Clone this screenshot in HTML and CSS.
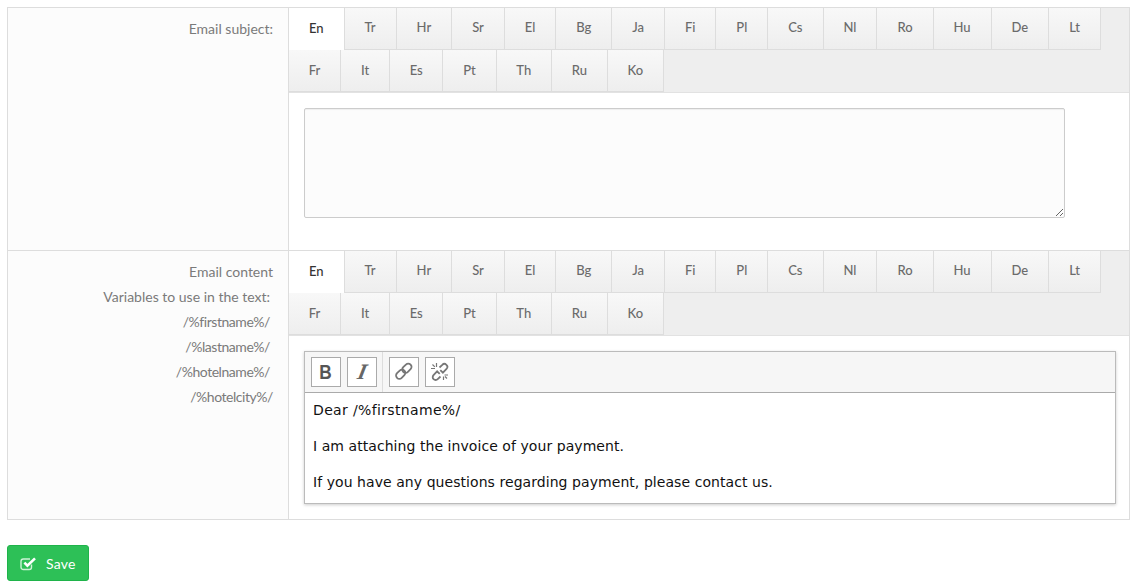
FILE: index.html
```html
<!DOCTYPE html>
<html lang="en">
<head>
<meta charset="utf-8">
<title>Email settings</title>
<link rel="stylesheet" href="styles.css">
</head>
<body>
<div class="form">
  <div class="row row-subject">
    <div class="label"><div class="line">Email subject:</div></div>
    <div class="field">
      <div class="tabs">
        <a class="tab active">En</a><a class="tab">Tr</a><a class="tab">Hr</a><a class="tab">Sr</a><a class="tab">El</a><a class="tab">Bg</a><a class="tab">Ja</a><a class="tab">Fi</a><a class="tab">Pl</a><a class="tab">Cs</a><a class="tab">Nl</a><a class="tab">Ro</a><a class="tab">Hu</a><a class="tab">De</a><a class="tab">Lt</a>
        <a class="tab">Fr</a><a class="tab">It</a><a class="tab">Es</a><a class="tab">Pt</a><a class="tab">Th</a><a class="tab">Ru</a><a class="tab">Ko</a>
      </div>
      <div class="pane"><textarea class="subject"></textarea></div>
    </div>
  </div>
  <div class="row row-content">
    <div class="label">
      <div class="line">Email content</div>
      <div class="line inset">Variables to use in the text:</div>
      <div class="line inset var">/%firstname%/</div>
      <div class="line inset var">/%lastname%/</div>
      <div class="line inset var">/%hotelname%/</div>
      <div class="line var">/%hotelcity%/</div>
    </div>
    <div class="field">
      <div class="tabs">
        <a class="tab active">En</a><a class="tab">Tr</a><a class="tab">Hr</a><a class="tab">Sr</a><a class="tab">El</a><a class="tab">Bg</a><a class="tab">Ja</a><a class="tab">Fi</a><a class="tab">Pl</a><a class="tab">Cs</a><a class="tab">Nl</a><a class="tab">Ro</a><a class="tab">Hu</a><a class="tab">De</a><a class="tab">Lt</a>
        <a class="tab">Fr</a><a class="tab">It</a><a class="tab">Es</a><a class="tab">Pt</a><a class="tab">Th</a><a class="tab">Ru</a><a class="tab">Ko</a>
      </div>
      <div class="pane">
        <div class="editor">
          <div class="toolbar">
            <div class="group">
              <button class="tool" type="button"><span class="glyph-b">B</span></button>
              <button class="tool" type="button"><span class="glyph-i">I</span></button>
            </div>
            <div class="group">
              <button class="tool" type="button" aria-label="Link">
                <svg width="20" height="20" viewBox="0 0 20 20" fill="none" stroke="#777" stroke-width="1.8"><rect x="9.6" y="1" width="6.6" height="10.4" rx="3.3" transform="rotate(45 12.9 6.2)"/><rect x="3.4" y="7" width="6.6" height="10.4" rx="3.3" transform="rotate(45 6.7 12.2)"/></svg>
              </button>
              <button class="tool" type="button" aria-label="Unlink">
                <svg width="20" height="20" viewBox="0 0 20 20" fill="none" stroke="#777" stroke-width="1.8"><path d="M9.5 5.5l2.8-2.6a2.9 2.9 0 0 1 4.2 4l-3.6 3.8-2.6-2.6"/><path d="M10.5 14.5l-2.8 2.6a2.9 2.9 0 0 1-4.2-4l3.6-3.8 2.6 2.6"/><path d="M6.5 1v4M1 6.5h4M2.5 2.5l2.3 2.3M17 16.5l-2-2M13.5 14.5v3.5M14.5 13h3.5" stroke-width="1.2"/></svg>
              </button>
            </div>
          </div>
          <div class="content">
            <p class="greeting">Dear /%firstname%/</p>
            <p>I am attaching the invoice of your payment.</p>
            <p>If you have any questions regarding payment, please contact us.</p>
          </div>
        </div>
      </div>
    </div>
  </div>
</div>
<button class="save" type="button">
  <svg width="17" height="15" viewBox="0 0 17 15" fill="none"><path d="M11.5 8.5v2.7a2.3 2.3 0 0 1-2.3 2.3H3.3A2.3 2.3 0 0 1 1 11.2V5.3A2.3 2.3 0 0 1 3.3 3H10" stroke="#cdf2d6" stroke-width="1.4"/><path d="M4.4 6.6L7.4 9.6 15 2.4" stroke="#fff" stroke-width="2.6"/></svg>
  <span>Save</span>
</button>
</body>
</html>
```

FILE: styles.css
```css
* { box-sizing: border-box; }
html, body { margin: 0; padding: 0; }
body {
  background: #fff;
  padding: 7px 7px 0;
  font-family: "Lato", "Liberation Sans", sans-serif;
  font-size: 14px;
  color: #7a7a7a;
  overflow: hidden;
}
.form {
  width: 1123px;
  border: 1px solid #ddd;
}
.row { display: flex; }
.row-subject { height: 243px; border-bottom: 1px solid #ddd; }
.row-content { height: 268px; }
.label {
  width: 281px;
  flex: none;
  background: #fcfcfc;
  border-right: 1px solid #ddd;
  padding: 8px 15px 0 0;
  text-align: right;
}
.line { line-height: 25px; height: 25px; }
.inset { padding-right: 3px; }
.var { letter-spacing: -.45px; }
.field { flex: 1; min-width: 0; display: flex; flex-direction: column; }
.tabs {
  display: flex;
  flex-wrap: wrap;
  align-content: flex-start;
  height: 85px;
  background: #eee;
  border-bottom: 1px solid #e2e2e2;
}
.tab {
  height: 42px;
  padding: 0 20px 3px;
  display: flex;
  align-items: center;
  font-size: 13px;
  font-weight: 500;
  letter-spacing: -.03px;
  color: #6b6b6b;
  background: linear-gradient(#f8f8f8, #eee);
  border-right: 1px solid #ddd;
  border-bottom: 1px solid #ddd;
}
.tab:nth-child(n+16) { padding: 0 19.8px 1px; }
.tab.active {
  background: #fff;
  color: #333;
  border-bottom-color: #fff;
  height: 43px;
  margin-bottom: -1px;
}
.pane { flex: 1; background: #fff; padding: 15px; }
.subject {
  display: block;
  width: 761px;
  height: 110px;
  margin: 0;
  border: 1px solid #ccc;
  border-radius: 2px;
  background: #fcfcfc;
  box-shadow: inset 0 1px 1px rgba(0,0,0,.06);
  resize: both;
}
.editor {
  width: 812px;
  height: 153px;
  border: 1px solid #bbb;
  box-shadow: 0 1px 3px rgba(0,0,0,.2);
  font-family: "DejaVu Sans", sans-serif;
}
.toolbar {
  display: flex;
  height: 41px;
  background: #f6f6f6;
  border-bottom: 1px solid #aaa;
}
.group { display: flex; gap: 6px; padding: 5px 5px 5px 6px; border-right: 1px solid #ddd; }
.group:last-child { border-right: 0; }
.tool {
  width: 30px;
  height: 30px;
  padding: 0;
  display: flex;
  align-items: center;
  justify-content: center;
  background: #fff;
  border: 1px solid #aaa;
}
.glyph-b {
  display: inline-block;
  font: bold 21px "Liberation Sans", sans-serif;
  color: #555;
  transform: scaleX(.82);
}
.glyph-i {
  display: inline-block;
  font: italic bold 22px "Liberation Serif", serif;
  color: #666;
  transform: skewX(-12deg);
}
.content { padding: 7px 8px; background: #fff; font-size: 14px; line-height: 20px; color: #111; letter-spacing: .06px; }
.content p { margin: 0 0 16px; }
.content p:last-child { margin-bottom: 0; }
.content .greeting { letter-spacing: .35px; }
.save {
  display: flex;
  align-items: center;
  margin-top: 25px;
  width: 82px;
  height: 36px;
  padding: 0 0 0 12px;
  background: #2dc057;
  border: 1px solid #1fb34a;
  border-radius: 3px;
  color: #fff;
  font-family: "Lato", sans-serif;
  font-size: 14px;
  letter-spacing: .2px;
}
.save span { margin-left: 9px; }
```
